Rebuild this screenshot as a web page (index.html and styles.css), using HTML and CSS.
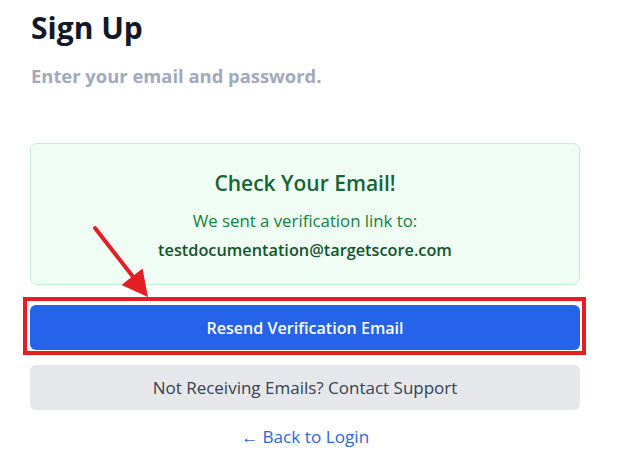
FILE: index.html
```html
<!DOCTYPE html>
<html>
<head>
<meta charset="utf-8">
<link rel="stylesheet" href="styles.css">
</head>
<body>
<main class="page">
  <h1 class="title">Sign Up</h1>
  <p class="subtitle">Enter your email and password.</p>
  <section class="notice">
    <h2 class="notice-title">Check Your Email!</h2>
    <p class="notice-text">We sent a verification link to:</p>
    <p class="notice-email">testdocumentation@targetscore.com</p>
  </section>
  <div class="highlight-wrap">
    <button class="btn btn-primary">Resend Verification Email</button>
    <div class="highlight-box"></div>
    <svg class="arrow" width="80" height="90" viewBox="0 0 80 90">
      <line x1="2" y1="3" x2="41" y2="53" stroke="#e31e24" stroke-width="4" stroke-linecap="round"/>
      <polygon points="28.5,60 49.5,43.5 55,72" fill="#e31e24"/>
    </svg>
  </div>
  <button class="btn btn-secondary">Not Receiving Emails? Contact Support</button>
  <a class="back" href="#">← Back to Login</a>
</main>
</body>
</html>
```
FILE: styles.css
```css
* { box-sizing: border-box; }
html, body { margin: 0; padding: 0; background: #fff; }
body { font-family: "Open Sans", "Noto Sans", sans-serif; }
.page {
  width: 550px;
  margin-left: 30px;
  padding-top: 8px;
  display: flex;
  flex-direction: column;
}
.title {
  margin: 0;
  font-size: 30px;
  line-height: 40px;
  font-weight: 700;
  color: #111827;
  padding-left: 1px;
}
.subtitle {
  margin: 16px 0 0;
  font-size: 18.4px;
  line-height: 24px;
  font-weight: 700;
  color: #a3a8bb;
  padding-left: 1px;
}
.notice {
  margin-top: 55px;
  height: 142px;
  border: 1px solid #c6f1d3;
  background: #f0fdf4;
  border-radius: 7px;
  display: flex;
  flex-direction: column;
  align-items: center;
  padding-top: 26px;
}
.notice-title {
  margin: 0;
  font-size: 21px;
  line-height: 26px;
  font-weight: 600;
  color: #166534;
}
.notice-text {
  margin: 13px 0 0;
  font-size: 16.8px;
  line-height: 24px;
  color: #15803d;
}
.notice-email {
  margin: 5px 0 0;
  font-size: 16.3px;
  line-height: 24px;
  font-weight: 600;
  color: #14532d;
}
.highlight-wrap {
  position: relative;
  margin-top: 20px;
}
.btn {
  width: 100%;
  height: 45px;
  border: none;
  border-radius: 6px;
  font-family: inherit;
  display: flex;
  align-items: center;
  justify-content: center;
}
.btn-primary {
  background: #2563eb;
  color: #fff;
  font-size: 16.1px;
  font-weight: 600;
}
.btn-secondary {
  margin-top: 15px;
  background: #e5e7eb;
  color: #374151;
  font-size: 17px;
  font-weight: 400;
}
.highlight-box {
  position: absolute;
  left: -7px;
  top: -8px;
  width: 563px;
  height: 58px;
  border: 4px solid #e31e24;
}
.arrow {
  position: absolute;
  left: 63px;
  top: -80px;
}
.back {
  margin-top: 15px;
  align-self: center;
  font-size: 17.2px;
  line-height: 24px;
  color: #2f66d8;
  text-decoration: none;
}
```
